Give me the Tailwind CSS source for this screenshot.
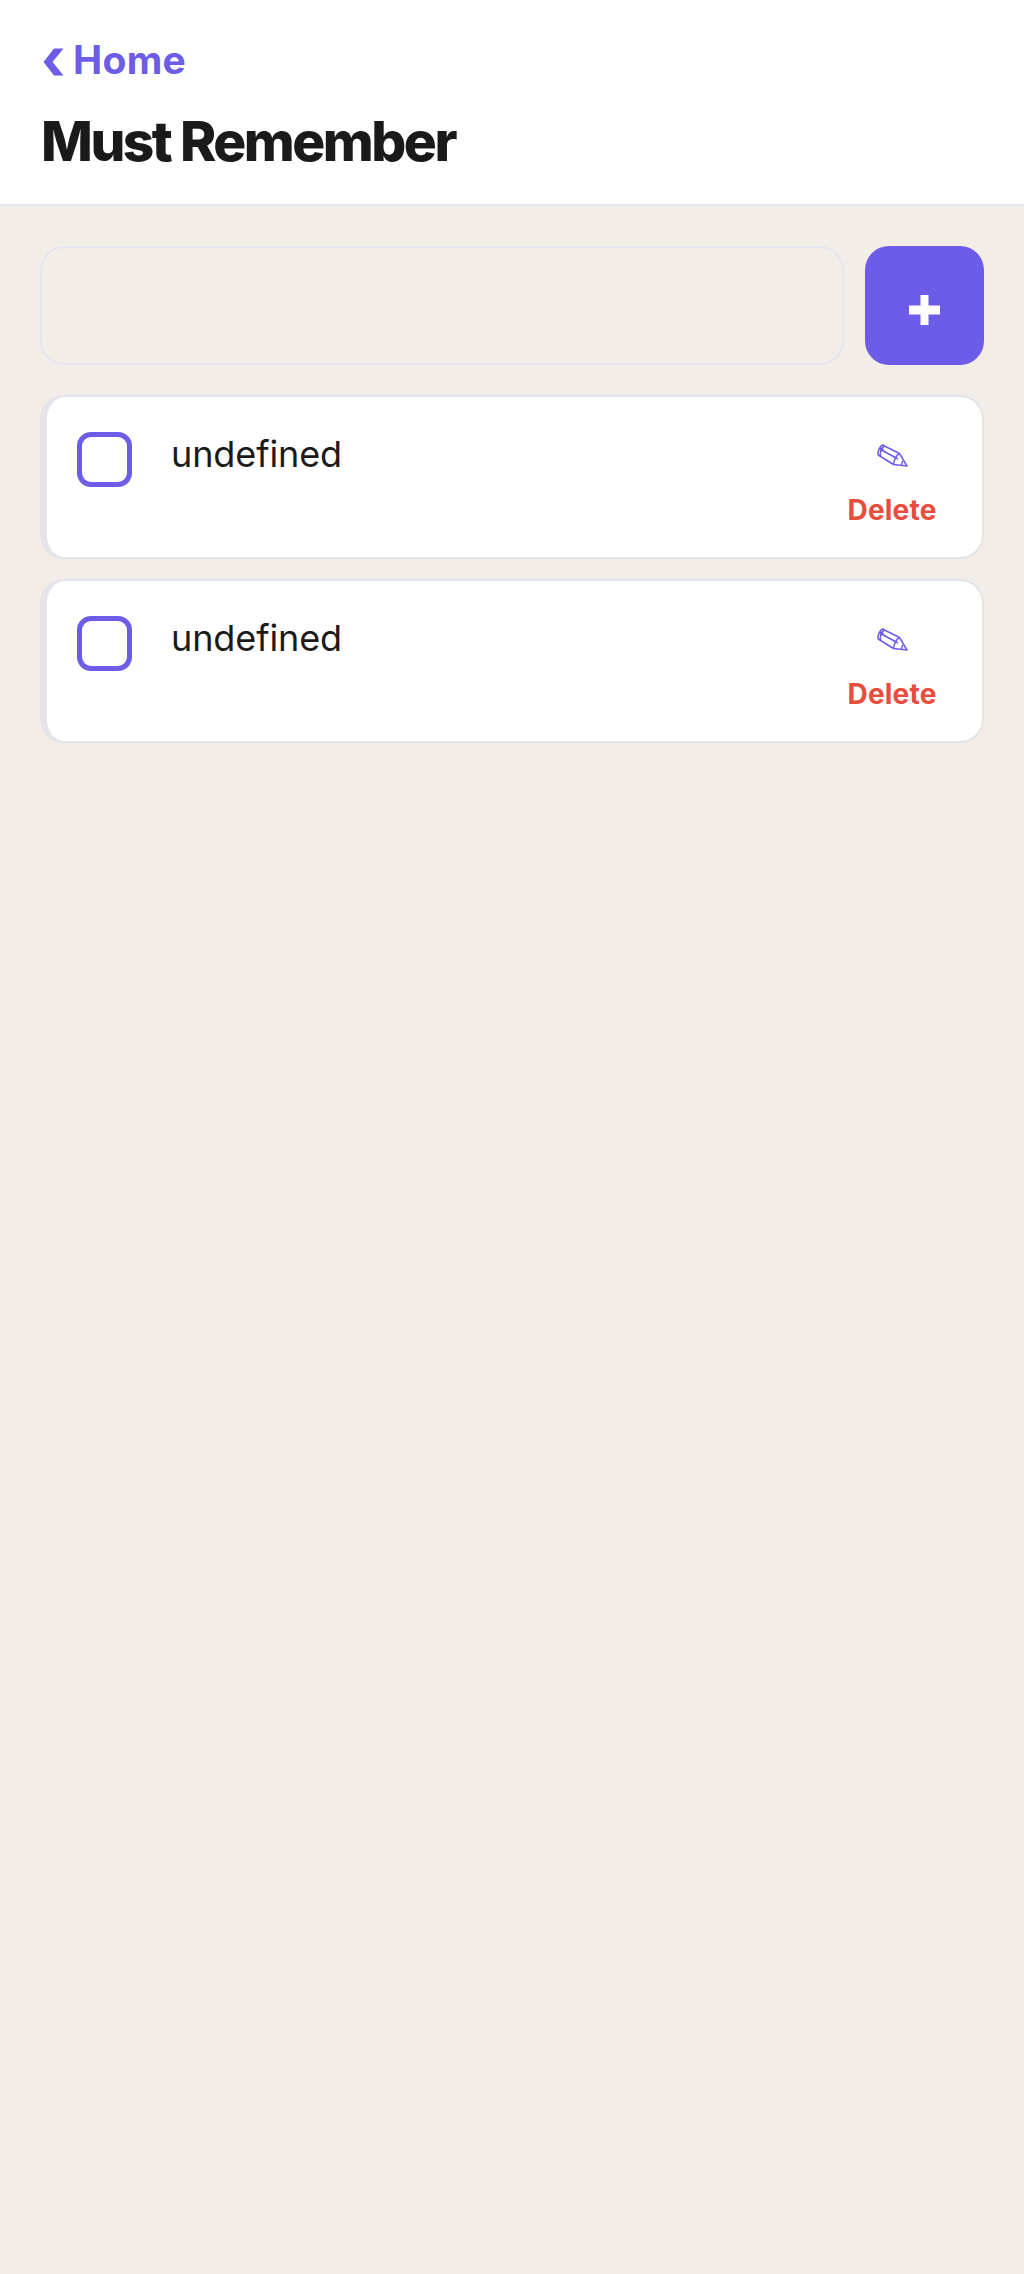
<!DOCTYPE html>
<html lang="en">
<head>
    <meta charset="UTF-8">
    <meta name="viewport" content="width=device-width, initial-scale=1.0">
    <title>Must Remember</title>
    <script src="https://cdn.jsdelivr.net/npm/@tailwindcss/browser@4"></script>
</head>
<body class="bg-[#f2ede7] font-['Inter',sans-serif] h-[2274px] overflow-hidden">
    <header class="bg-white h-[206px] border-b-2 border-[#e4e4ea] pl-[41px] pt-[35px]">
        <a class="flex items-center gap-[9px] text-[#6c5ce7] h-[50px] pl-[2px]">
            <svg class="w-[21px] h-[28px] mt-[4px]" viewBox="0 0 21 28"><path d="M20.500 0.500 L9.500 14 L20.500 27.500 H11 L0.500 14 L11 0.500 Z" fill="currentColor"/></svg>
            <span class="text-[39px] leading-[50px] font-bold tracking-[0.3px]">Home</span>
        </a>
        <h1 class="mt-[23px] text-[55px] leading-[66px] font-extrabold tracking-[-2.500px] text-[#1a1a1a]">Must Remember</h1>
    </header>
    <main class="px-[40px] pt-[40px]">
        <div class="flex gap-[21px] h-[119px]">
            <input type="text" class="flex-1 min-w-0 bg-transparent border-2 border-[#e5e5ee] rounded-[24px]">
            <button class="w-[119px] bg-[#6c5ce7] rounded-[24px] text-white flex items-center justify-center">
                <svg class="w-[31px] h-[30px] mt-[9px]" viewBox="0 0 31 30"><path d="M11.500 0h8v10.500h11.500v9H19.500V30h-8V19.500H0v-9h11.500z" fill="currentColor"/></svg>
            </button>
        </div>
        <ul class="mt-[30px] flex flex-col gap-[20px]">
            <li class="h-[164px] bg-white rounded-[24px] border-2 border-l-[7px] border-[#e3e3ea] pl-[30px] pr-[44px] pt-[35px] flex">
                <span class="w-[55px] h-[55px] shrink-0 border-[5px] border-[#6c5ce7] rounded-[14px]"></span>
                <span class="ml-[39px] flex-1 text-[36px] leading-[44px] tracking-[-0.1px] text-[#1a1a1a]">undefined</span>
                <div class="w-[92px] flex flex-col items-center">
                    <svg class="w-[31px] h-[23px] mt-[12px]" viewBox="0 0 31 23" fill="none" stroke="#6c5ce7" stroke-width="1.500" stroke-linejoin="round"><path d="M5.500 1 L22.500 9.500 L30 22 L16.500 20.500 L1.200 11 C0.300 7.500 2.500 2.500 5.500 1Z"/><path d="M4.500 6 L21 15 M7.500 2 C5 3.500 2.800 7.500 3.400 12.500 M22.500 9.500 C19.500 11 17.200 15.500 16.500 20.500 M25.800 17 C25 18.500 24.500 20 24.500 21.500"/><circle cx="4.500" cy="5.500" r="1.300"/></svg>
                    <span class="mt-[25px] text-[28px] leading-[36px] font-bold tracking-[0.2px] text-[#e74c3c]">Delete</span>
                </div>
            </li>
            <li class="h-[164px] bg-white rounded-[24px] border-2 border-l-[7px] border-[#e3e3ea] pl-[30px] pr-[44px] pt-[35px] flex">
                <span class="w-[55px] h-[55px] shrink-0 border-[5px] border-[#6c5ce7] rounded-[14px]"></span>
                <span class="ml-[39px] flex-1 text-[36px] leading-[44px] tracking-[-0.1px] text-[#1a1a1a]">undefined</span>
                <div class="w-[92px] flex flex-col items-center">
                    <svg class="w-[31px] h-[23px] mt-[12px]" viewBox="0 0 31 23" fill="none" stroke="#6c5ce7" stroke-width="1.500" stroke-linejoin="round"><path d="M5.500 1 L22.500 9.500 L30 22 L16.500 20.500 L1.200 11 C0.300 7.500 2.500 2.500 5.500 1Z"/><path d="M4.500 6 L21 15 M7.500 2 C5 3.500 2.800 7.500 3.400 12.500 M22.500 9.500 C19.500 11 17.200 15.500 16.500 20.500 M25.800 17 C25 18.500 24.500 20 24.500 21.500"/><circle cx="4.500" cy="5.500" r="1.300"/></svg>
                    <span class="mt-[25px] text-[28px] leading-[36px] font-bold tracking-[0.2px] text-[#e74c3c]">Delete</span>
                </div>
            </li>
        </ul>
    </main>
</body>
</html>
